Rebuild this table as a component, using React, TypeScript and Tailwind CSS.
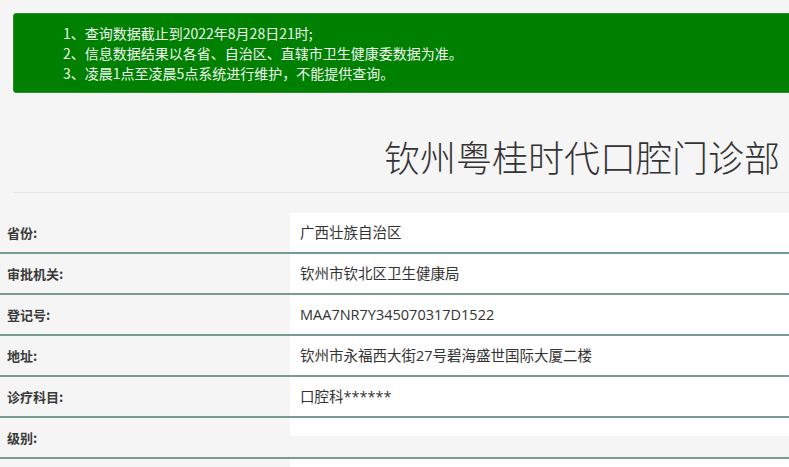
const rows: { label: string; value: string; short?: boolean }[] = [
  { label: '省份:', value: '广西壮族自治区' },
  { label: '审批机关:', value: '钦州市钦北区卫生健康局' },
  { label: '登记号:', value: 'MAA7NR7Y345070317D1522' },
  { label: '地址:', value: '钦州市永福西大街27号碧海盛世国际大厦二楼' },
  { label: '诊疗科目:', value: '口腔科******' },
  { label: '级别:', value: '', short: true },
  { label: '', value: '' },
];

export default function App() {
  return (
    <div
      className="w-[789px] h-[467px] overflow-hidden bg-[#f5f5f5] text-[#333]"
      style={{ fontFamily: '"Noto Sans CJK SC", "Noto Sans", sans-serif' }}
    >
      <div className="pl-[13px] pt-[13px]">
        <div className="w-[790px] rounded-[3px] border border-[#2e8b2e] bg-[#008000] pl-[49px] py-[9px] text-[14px] leading-[20px] text-[#eef7ee]">
          <p>1、查询数据截止到2022年8月28日21时;</p>
          <p>2、信息数据结果以各省、自治区、直辖市卫生健康委数据为准。</p>
          <p>3、凌晨1点至凌晨5点系统进行维护，不能提供查询。</p>
        </div>
      </div>

      <div className="flex h-[99px] items-end justify-end pr-[9px] pb-[14px]">
        <h1 className="text-[36px] font-light leading-[44px] text-[#333]">钦州粤桂时代口腔门诊部</h1>
      </div>
      <div className="ml-[13px] h-px bg-[#e6e6e6]" />

      <div className="mt-[20px]">
        {rows.map((r, i) => (
          <div key={i} className="flex h-[41px] border-b-2 border-[#779b8d]">
            <div className="flex w-[290px] items-center pl-[7px] text-[13px] font-bold text-[#3a3a3a]">{r.label}</div>
            <div
              className={`flex flex-1 items-center bg-white pl-[10px] text-[14.5px] text-[#333] ${r.short ? 'h-[18px] self-start' : ''}`}
              style={{ fontFamily: '"Open Sans", "Noto Sans CJK SC", sans-serif' }}
            >
              {r.value}
            </div>
          </div>
        ))}
      </div>
    </div>
  );
}
